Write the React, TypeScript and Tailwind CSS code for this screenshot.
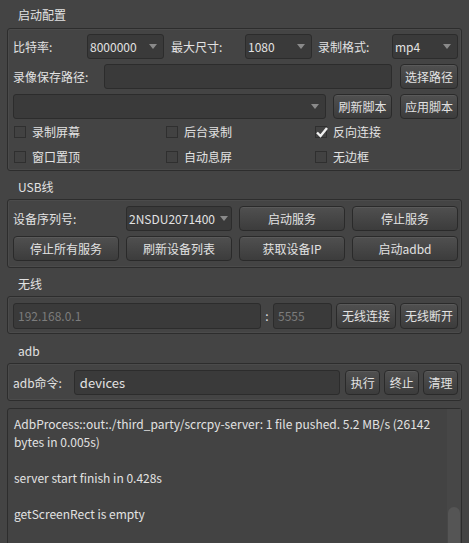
import React from 'react';

const font = { fontFamily: '"Noto Sans CJK SC", "Noto Sans", sans-serif' };

const Btn: React.FC<{ children: React.ReactNode; className?: string }> = ({ children, className = '' }) => (
  <div
    className={`flex items-center justify-center rounded-[4px] border border-[#2a2a2a] bg-gradient-to-b from-[#505050] to-[#3c3c3c] text-[12px] text-[#e2e2e2] shadow-[inset_0_1px_0_rgba(255,255,255,0.06)] ${className}`}
  >
    {children}
  </div>
);

const Input: React.FC<{ value?: string; placeholder?: string; className?: string }> = ({
  value,
  placeholder,
  className = '',
}) => (
  <div
    className={`flex items-center rounded-[3px] border border-[#2c2c2c] bg-[#3a3a3a] px-[4px] text-[12px] ${className}`}
  >
    {value ? (
      <span className="text-[#e2e2e2]">{value}</span>
    ) : placeholder ? (
      <span className="text-[#7c7c7c]">{placeholder}</span>
    ) : null}
  </div>
);

const Combo: React.FC<{ value?: string; className?: string }> = ({ value, className = '' }) => (
  <div
    className={`flex items-center justify-between rounded-[3px] border border-[#2c2c2c] bg-[#3a3a3a] pl-[2px] pr-[6px] text-[12px] text-[#e2e2e2] ${className}`}
  >
    <span>{value}</span>
    <svg width="8" height="5" viewBox="0 0 8 5">
      <path d="M0 0 L8 0 L4 5 Z" fill="#8a8a8a" />
    </svg>
  </div>
);

const Check: React.FC<{ label: string; checked?: boolean; className?: string }> = ({
  label,
  checked,
  className = '',
}) => (
  <div className={`flex items-center gap-[6px] ${className}`}>
    <div className="relative h-[12px] w-[12px] border border-[#2f2f2f] bg-[#424242]">
      {checked ? (
        <svg className="absolute -left-[1px] -top-[2px]" width="14" height="14" viewBox="0 0 14 14">
          <path d="M2 7.5 L5.5 11 L12 3" stroke="#f0f0f0" strokeWidth="2.4" fill="none" />
        </svg>
      ) : null}
    </div>
    <span className="text-[12px] text-[#e2e2e2]">{label}</span>
  </div>
);

const Group: React.FC<{ title: string; children: React.ReactNode; titleClass?: string; boxClass?: string }> = ({
  title,
  children,
  titleClass = 'h-[28px]',
  boxClass = '',
}) => (
  <div>
    <div className={`flex items-end pb-[4px] pl-[18px] text-[12px] leading-[16px] text-[#e2e2e2] ${titleClass}`}>
      {title}
    </div>
    <div
      className={`mx-[7px] rounded-[3px] border border-[#2d2d2d] shadow-[inset_0_0_0_1px_rgba(255,255,255,0.04)] pl-[5px] pr-[3px] ${boxClass}`}
    >
      {children}
    </div>
  </div>
);

export default function App() {
  return (
    <div className="h-[543px] w-[469px] overflow-hidden bg-[#444444] text-[#e2e2e2]" style={font}>
      <Group title="启动配置" titleClass="h-[28px] pb-[5px]" boxClass="pt-[5px] pb-[1px]">
        <div className="flex h-[25px] items-stretch">
          <div className="flex w-[74px] items-center text-[12px]">比特率:</div>
          <Combo value="8000000" className="w-[77px]" />
          <div className="ml-[7px] flex w-[74px] items-center text-[12px]">最大尺寸:</div>
          <Combo value="1080" className="w-[67px]" />
          <div className="ml-[6px] flex w-[74px] items-center text-[12px]">录制格式:</div>
          <Combo value="mp4" className="w-[66px]" />
        </div>
        <div className="mt-[5px] flex h-[25px] items-stretch">
          <div className="flex w-[91px] items-center text-[12px]">录像保存路径:</div>
          <Input className="w-[288px]" />
          <Btn className="ml-[8px] w-[58px]">选择路径</Btn>
        </div>
        <div className="mt-[5px] flex h-[25px] items-stretch">
          <Combo className="w-[313px]" />
          <Btn className="ml-[7px] w-[59px]">刷新脚本</Btn>
          <Btn className="ml-[8px] w-[58px]">应用脚本</Btn>
        </div>
        <div className="flex h-[25px] items-center pl-[1px]">
          <Check label="录制屏幕" className="w-[152px]" />
          <Check label="后台录制" className="w-[149px]" />
          <Check label="反向连接" checked />
        </div>
        <div className="flex h-[25px] items-center pl-[1px]">
          <Check label="窗口置顶" className="w-[152px]" />
          <Check label="自动息屏" className="w-[149px]" />
          <Check label="无边框" />
        </div>
      </Group>

      <Group title="USB线" boxClass="py-[6px]">
        <div className="grid grid-cols-4 gap-x-[7px] gap-y-[5px]">
          <div className="flex h-[25px] items-center text-[12px]">设备序列号:</div>
          <Combo value="2NSDU2071400" className="h-[25px] !pr-[3px]" />
          <Btn className="h-[25px]">启动服务</Btn>
          <Btn className="h-[25px]">停止服务</Btn>
          <Btn className="h-[25px]">停止所有服务</Btn>
          <Btn className="h-[25px]">刷新设备列表</Btn>
          <Btn className="h-[25px]">获取设备IP</Btn>
          <Btn className="h-[25px]">启动adbd</Btn>
        </div>
      </Group>

      <Group title="无线" boxClass="pt-[6px] pb-[4px]">
        <div className="flex h-[26px] items-stretch">
          <Input placeholder="192.168.0.1" className="w-[248px]" />
          <div className="flex w-[12px] items-center justify-center text-[12px]">:</div>
          <Input placeholder="5555" className="w-[59px]" />
          <Btn className="ml-[4px] w-[60px]">无线连接</Btn>
          <Btn className="ml-[4px] w-[58px]">无线断开</Btn>
        </div>
      </Group>

      <Group title="adb" titleClass="h-[29px]" boxClass="pt-[6px] pb-[5px]">
        <div className="flex h-[25px] items-stretch">
          <div className="flex w-[61px] items-center text-[12px]">adb命令:</div>
          <Input value="devices" className="w-[267px] !px-[5px] text-[13px]" />
          <Btn className="ml-[5px] w-[35px]">执行</Btn>
          <Btn className="ml-[4px] w-[35px]">终止</Btn>
          <Btn className="ml-[4px] w-[35px]">清理</Btn>
        </div>
      </Group>

      <div className="mx-[7px] mt-[7px] flex h-[150px] rounded-t-[3px] border border-[#2d2d2d] bg-[#434343]">
        <div className="flex-1 pl-[6px] pr-[4px] pt-[6px] text-[12px] leading-[18px] text-[#e2e2e2]">
          <div>AdbProcess::out:./third_party/scrcpy-server: 1 file pushed. 5.2 MB/s (26142</div>
          <div>bytes in 0.005s)</div>
          <div>&nbsp;</div>
          <div>server start finish in 0.428s</div>
          <div>&nbsp;</div>
          <div>getScreenRect is empty</div>
        </div>
        <div className="flex w-[14px] flex-col justify-end bg-[#474747] pb-[4px]">
          <div className="mx-[1px] h-[46px] rounded-t-[6px] bg-[#555555]" />
        </div>
      </div>
    </div>
  );
}
